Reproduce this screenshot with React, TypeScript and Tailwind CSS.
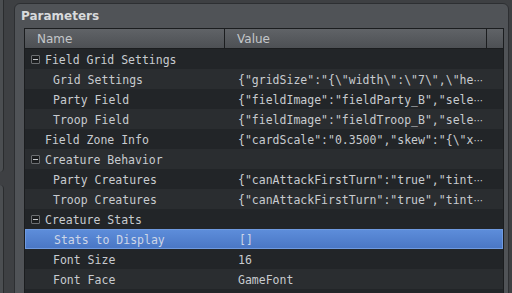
import React from 'react';

interface Row {
  name: string;
  value?: string;
  level: 0 | 1;
  group?: boolean;
  cut?: boolean;
}

const rows: Row[] = [
  { name: 'Field Grid Settings', level: 0, group: true },
  { name: 'Grid Settings', value: '{"gridSize":"{\\"width\\":\\"7\\",\\"he', level: 1, cut: true },
  { name: 'Party Field', value: '{"fieldImage":"fieldParty_B","sele', level: 1, cut: true },
  { name: 'Troop Field', value: '{"fieldImage":"fieldTroop_B","sele', level: 1, cut: true },
  { name: 'Field Zone Info', value: '{"cardScale":"0.3500","skew":"{\\"x', level: 0, cut: true },
  { name: 'Creature Behavior', level: 0, group: true },
  { name: 'Party Creatures', value: '{"canAttackFirstTurn":"true","tint', level: 1, cut: true },
  { name: 'Troop Creatures', value: '{"canAttackFirstTurn":"true","tint', level: 1, cut: true },
  { name: 'Creature Stats', level: 0, group: true },
  { name: 'Stats to Display', value: '[]', level: 1 },
  { name: 'Font Size', value: '16', level: 1 },
  { name: 'Font Face', value: 'GameFont', level: 1 },
];

const SELECTED = 9;

const App: React.FC = () => {
  return (
    <div className="w-[512px] h-[293px] overflow-hidden bg-[#3e4043] flex font-['DejaVu_Sans',sans-serif]">
      {/* neighbouring docks on the left */}
      <div className="w-[14px] shrink-0 flex flex-col gap-[13px]">
        <div className="w-[4px] h-[172px] bg-[#4b4e51] border-r border-[#2a2c2e] rounded-br-[4px]" />
        <div className="w-[4px] flex-1 bg-[#4b4e51] border-r border-[#2a2c2e] rounded-tr-[4px]" />
      </div>

      <div className="mt-[3px] w-[495px] h-[300px] shrink-0 bg-[#505357] border border-[#2d2f32] rounded-t-[6px] flex flex-col">
        <div className="h-[24px] flex items-center pl-[6px] text-[12px] font-bold text-[#d8dadc]">Parameters</div>

        <div className="ml-[9px] w-[480px] flex-1 border border-[#1b1d1f] bg-[#222528] flex flex-col">
          <div className="h-[20px] flex bg-gradient-to-b from-[#606367] to-[#4d5054] border-b border-[#1b1d1f] text-[12px] text-[#c4c7ca]">
            <div className="w-[200px] border-r border-[#1b1d1f] pl-[12px] flex items-center">Name</div>
            <div className="w-[262px] border-r border-[#1b1d1f] pl-[12px] flex items-center">Value</div>
            <div className="flex-1" />
          </div>

          {rows.map((row, i) => {
            const selected = i === SELECTED;
            const bg = selected
              ? 'bg-gradient-to-b from-[#5d8dda] to-[#4a77c5] border border-[#6f9ae0] text-[#cdd6e8]'
              : i % 2 === 0
                ? 'bg-[#222528] text-[#c8cbcf]'
                : 'bg-[#2a2d30] text-[#c8cbcf]';
            return (
              <div
                key={row.name}
                className={`h-[20px] shrink-0 flex items-center font-['DejaVu_Sans_Mono',monospace] text-[11.5px] whitespace-nowrap ${bg}`}
              >
                <div className={`w-[200px] shrink-0 flex items-center ${row.level === 1 ? 'pl-[28px]' : 'pl-[6px]'}`}>
                  {row.level === 0 && (
                    <span
                      className={`w-[9px] h-[9px] mr-[5px] rounded-[1px] flex items-center justify-center ${
                        row.group ? 'border border-[#6b6e71] bg-[#1c1e20]' : ''
                      }`}
                    >
                      {row.group && <span className="w-[5px] h-px bg-[#c8cbcf]" />}
                    </span>
                  )}
                  <span className="pt-[4px]">{row.name}</span>
                </div>
                <div className="pl-[13px] pt-[4px] overflow-hidden flex items-baseline">
                  <span>{row.value}</span>
                  {row.cut && <span className="font-['DejaVu_Sans',sans-serif] text-[10px]">⋯</span>}
                </div>
              </div>
            );
          })}
        </div>
      </div>
    </div>
  );
};

export default App;
